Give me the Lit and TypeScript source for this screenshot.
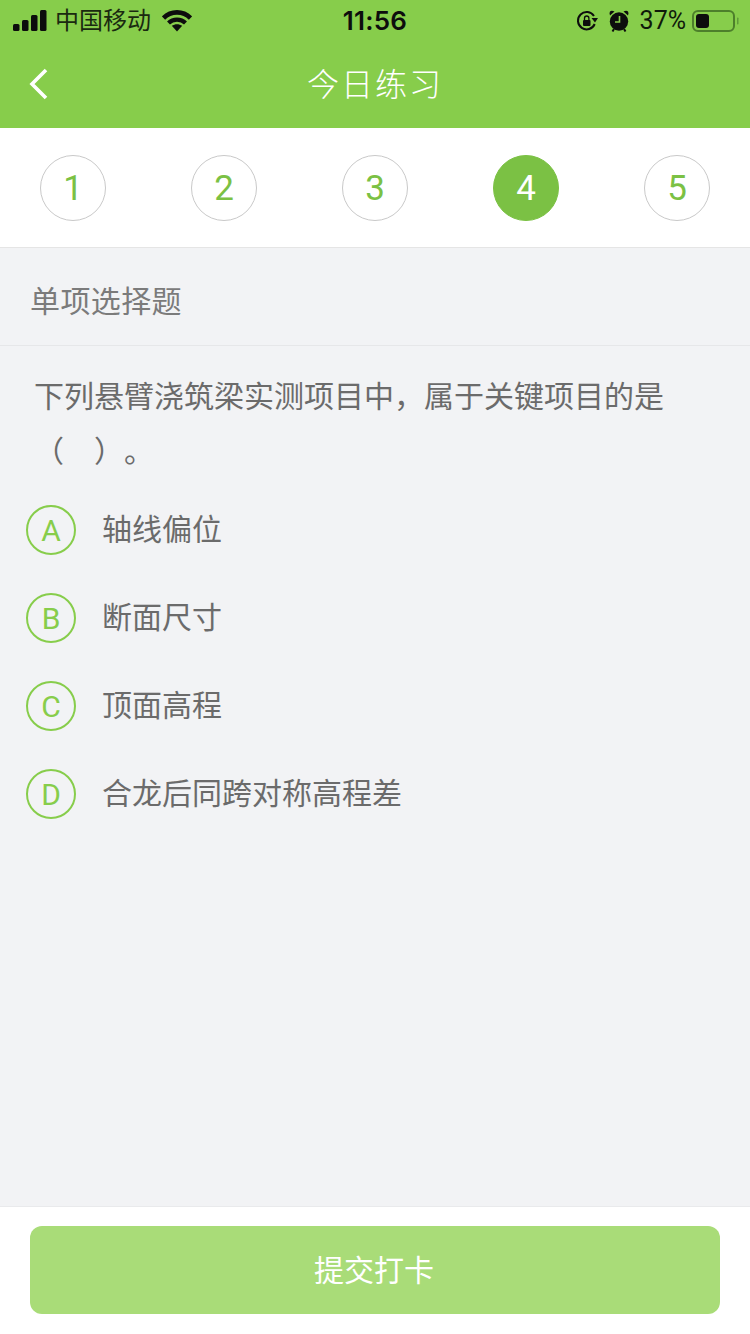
import { LitElement, html, css } from "lit";
import { customElement } from "lit/decorators.js";

@customElement("app-root")
export class AppRoot extends LitElement {
  static styles = css`
    :host {
      display: flex;
      flex-direction: column;
      height: 1334px;
      width: 750px;
      background: #f2f3f5;
      font-family: "Liberation Sans", "Noto Sans CJK SC", sans-serif;
      overflow: hidden;
      text-spacing-trim: space-all;
    }
    .head { background: #87cd4b; height: 128px; flex: none; display: flex; flex-direction: column; }
    .status { height: 40px; box-sizing: border-box; padding: 1px 11px 0 13px; display: flex; align-items: center; position: relative; color: #111; }
    .carrier { font-size: 24px; margin-left: 8px; line-height: 40px; color: #1a2a10; }
    .wifi { margin-left: 11px; }
    .time { position: absolute; left: 0; right: 0; top: 1px; line-height: 40px; text-align: center; font-family: Inter, "Liberation Sans", sans-serif; font-size: 26px; font-weight: 600; letter-spacing: 0.2px; color: #0d0d0d; }
    .right { margin-left: auto; display: flex; align-items: center; }
    .pct { font-family: Roboto, sans-serif; font-size: 25px; font-weight: 400; margin-left: 11px; margin-right: 6px; color: #0f1a0a; }
    .alarm { margin-left: 11px; }
    .nav { flex: 1; display: flex; align-items: center; justify-content: center; position: relative; padding-top: 2px; }
    .back { position: absolute; left: 29px; top: 28px; }
    .title { color: #fff; font-size: 32px; letter-spacing: 2px; font-weight: 300; line-height: 40px; }
    .steps { height: 120px; box-sizing: border-box; flex: none; background: #fff; border-bottom: 1px solid #e5e5e5; display: flex; align-items: center; justify-content: space-between; padding: 0 40px; }
    .step { width: 66px; height: 66px; box-sizing: border-box; padding-top: 1px; border: 1px solid #c9c9c9; border-radius: 50%; display: flex; align-items: center; justify-content: center; font-family: Roboto, sans-serif; font-weight: 400; font-size: 35px; color: #7bc144; }
    .step.on { background: #7bc144; border-color: #7bc144; color: #fff; }
    .type { height: 98px; flex: none; border-bottom: 1px solid #e6e7e9; display: flex; align-items: center; padding: 4px 30px 0; box-sizing: border-box; font-size: 30px; letter-spacing: 0.4px; color: #7b7b7b; }
    .question { padding: 23px 60px 0 34px; font-size: 30px; line-height: 55px; color: #6b6b6b; }
    .options { display: flex; flex-direction: column; padding: 0 0 0 26px; margin-top: 7px; }
    .opt { height: 88px; display: flex; align-items: center; }
    .badge { width: 50px; height: 50px; box-sizing: border-box; border: 2px solid #87cd4b; border-radius: 50%; display: flex; align-items: center; justify-content: center; font-family: Roboto, sans-serif; font-weight: 400; font-size: 30px; color: #87cd4b; flex: none; }
    .label { margin-left: 26px; padding-bottom: 6px; font-size: 30px; color: #6b6b6b; }
    .spacer { flex: 1; }
    .foot { height: 128px; flex: none; box-sizing: border-box; background: #fff; border-top: 1px solid #e9eaec; padding: 19px 30px 20px; }
    .btn { height: 88px; box-sizing: border-box; padding: 0 2px 4px 0; background: #a9dc78; border-radius: 12px; display: flex; align-items: center; justify-content: center; color: #fff; font-size: 30px; }
  `;

  render() {
    const steps = [1, 2, 3, 4, 5];
    const opts = [["A", "轴线偏位"], ["B", "断面尺寸"], ["C", "顶面高程"], ["D", "合龙后同跨对称高程差"]];
    return html`
      <div class="head">
        <div class="status">
          <svg width="34" height="22" viewBox="0 0 34 22">
            <rect x="0" y="14" width="6.5" height="7" rx="1.5" fill="#0d0d0d"/>
            <rect x="9" y="10" width="6.5" height="11" rx="1.5" fill="#0d0d0d"/>
            <rect x="18" y="5" width="6.5" height="16" rx="1.5" fill="#0d0d0d"/>
            <rect x="27" y="0" width="6.5" height="21" rx="1.5" fill="#0d0d0d"/>
          </svg>
          <span class="carrier">中国移动</span>
          <svg class="wifi" width="30" height="22" viewBox="0 0 30 22" fill="none">
            <path d="M1.5 8 C9 0.5 21 0.5 28.5 8" stroke="#0d0d0d" stroke-width="4.6"/>
            <path d="M6.5 13 C11 8.6 19 8.6 23.5 13" stroke="#0d0d0d" stroke-width="4.2"/>
            <path d="M9.8 15.8 C13 13.6 17 13.6 20.2 15.8 L15 21.5 Z" fill="#0d0d0d"/>
          </svg>
          <span class="time">11:56</span>
          <div class="right">
            <svg width="22" height="22" viewBox="0 0 22 22" fill="none">
              <path d="M18.7 14 A8.7 8.7 0 1 1 18 6" stroke="#0d0d0d" stroke-width="2"/>
              <path d="M15.5 8 L22 8 L19 12.5 Z" fill="#0d0d0d"/>
              <rect x="7" y="10" width="7.5" height="6" rx="1" fill="#0d0d0d"/>
              <path d="M8.5 10 V8.2 a2.2 2.2 0 0 1 4.4 0 V10" stroke="#0d0d0d" stroke-width="1.3"/>
            </svg>
            <svg class="alarm" width="20" height="22" viewBox="0 0 20 22" fill="none">
              <circle cx="10" cy="11.5" r="9.2" fill="#0d0d0d"/>
              <path d="M10.5 6 V12 H6" stroke="#87cd4b" stroke-width="1.6"/>
              <path d="M1 5.5 L5.5 1.5 Q2.5 0 1 1.5 Q0 3 1 5.5 Z M19 5.5 L14.5 1.5 Q17.5 0 19 1.5 Q20 3 19 5.5 Z" fill="#0d0d0d"/>
              <path d="M5 19 L3.5 21.5 M15 19 L16.5 21.5" stroke="#0d0d0d" stroke-width="2"/>
            </svg>
            <span class="pct">37%</span>
            <svg width="47" height="24" viewBox="0 0 47 24" fill="none">
              <rect x="1" y="2" width="41" height="20" rx="5" stroke="#4d7f2b" stroke-width="2"/>
              <rect x="4" y="5" width="13" height="14" rx="3" fill="#0d0d0d"/>
              <rect x="45" y="8.5" width="1.5" height="7" rx="0.7" fill="#5f9a38"/>
            </svg>
          </div>
        </div>
        <div class="nav">
          <svg class="back" width="20" height="32" viewBox="0 0 20 32" fill="none">
            <path d="M17 2 L3 16 L17 30" stroke="#fff" stroke-width="3.6"/>
          </svg>
          <span class="title">今日练习</span>
        </div>
      </div>
      <div class="steps">
        ${steps.map((n) => html`<div class="step ${n === 4 ? "on" : ""}">${n}</div>`)}
      </div>
      <div class="type">单项选择题</div>
      <div class="question">下列悬臂浇筑梁实测项目中，属于关键项目的是（　）。</div>
      <div class="options">
        ${opts.map(([k, t]) => html`<div class="opt"><div class="badge">${k}</div><div class="label">${t}</div></div>`)}
      </div>
      <div class="spacer"></div>
      <div class="foot"><div class="btn">提交打卡</div></div>
    `;
  }
}
